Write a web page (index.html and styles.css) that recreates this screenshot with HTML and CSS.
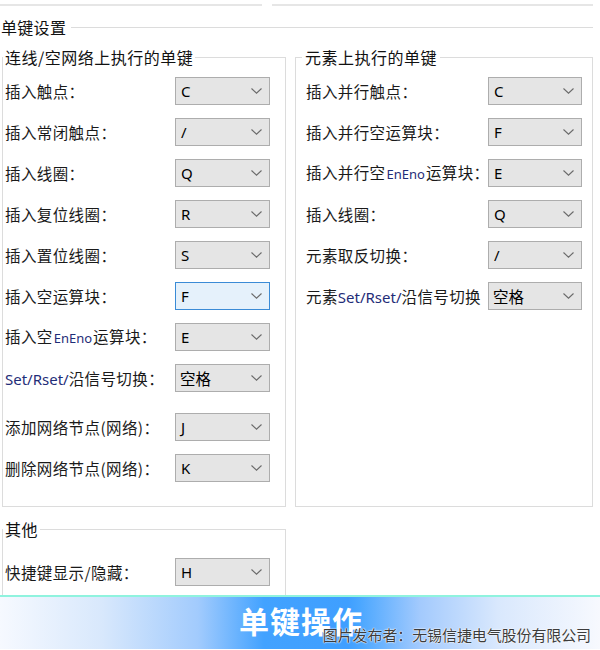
FILE: index.html
```html
<!DOCTYPE html>
<html lang="zh-CN">
<head>
<meta charset="utf-8">
<title>单键设置</title>
<link rel="stylesheet" href="styles.css">
</head>
<body>
<div class="page">
  <div class="topline"><span class="seg seg-left"></span><span class="seg seg-right"></span></div>
  <div class="heading"><span class="heading-text">单键设置</span><span class="heading-line"></span></div>

  <div class="groups">
    <fieldset class="group group-left">
      <legend class="legend legend-left">连线/空网络上执行的单键</legend>
      <div class="rows rows-left">
        <div class="row"><span class="label">插入触点：</span><div class="combo"><span class="val">C</span><svg class="chev" width="11" height="6" viewBox="0 0 11 6"><polyline points="0.5,0.5 5.5,5.2 10.5,0.5"/></svg></div></div>
        <div class="row"><span class="label">插入常闭触点：</span><div class="combo"><span class="val">/</span><svg class="chev" width="11" height="6" viewBox="0 0 11 6"><polyline points="0.5,0.5 5.5,5.2 10.5,0.5"/></svg></div></div>
        <div class="row"><span class="label">插入线圈：</span><div class="combo"><span class="val">Q</span><svg class="chev" width="11" height="6" viewBox="0 0 11 6"><polyline points="0.5,0.5 5.5,5.2 10.5,0.5"/></svg></div></div>
        <div class="row"><span class="label">插入复位线圈：</span><div class="combo"><span class="val">R</span><svg class="chev" width="11" height="6" viewBox="0 0 11 6"><polyline points="0.5,0.5 5.5,5.2 10.5,0.5"/></svg></div></div>
        <div class="row"><span class="label">插入置位线圈：</span><div class="combo"><span class="val">S</span><svg class="chev" width="11" height="6" viewBox="0 0 11 6"><polyline points="0.5,0.5 5.5,5.2 10.5,0.5"/></svg></div></div>
        <div class="row"><span class="label">插入空运算块：</span><div class="combo combo-focus"><span class="val">F</span><svg class="chev" width="11" height="6" viewBox="0 0 11 6"><polyline points="0.5,0.5 5.5,5.2 10.5,0.5"/></svg></div></div>
        <div class="row"><span class="label">插入空<span class="en-small">EnEno</span>运算块：</span><div class="combo"><span class="val">E</span><svg class="chev" width="11" height="6" viewBox="0 0 11 6"><polyline points="0.5,0.5 5.5,5.2 10.5,0.5"/></svg></div></div>
        <div class="row"><span class="label"><span class="en">Set/Rset/</span>沿信号切换：</span><div class="combo"><span class="val val-cjk">空格</span><svg class="chev" width="11" height="6" viewBox="0 0 11 6"><polyline points="0.5,0.5 5.5,5.2 10.5,0.5"/></svg></div></div>
        <div class="row row-sep"><span class="label">添加网络节点(网络)：</span><div class="combo"><span class="val">J</span><svg class="chev" width="11" height="6" viewBox="0 0 11 6"><polyline points="0.5,0.5 5.5,5.2 10.5,0.5"/></svg></div></div>
        <div class="row"><span class="label">删除网络节点(网络)：</span><div class="combo"><span class="val">K</span><svg class="chev" width="11" height="6" viewBox="0 0 11 6"><polyline points="0.5,0.5 5.5,5.2 10.5,0.5"/></svg></div></div>
      </div>
    </fieldset>

    <fieldset class="group group-right">
      <legend class="legend legend-right">元素上执行的单键</legend>
      <div class="rows rows-right">
        <div class="row"><span class="label label-right">插入并行触点：</span><div class="combo combo-right"><span class="val">C</span><svg class="chev" width="11" height="6" viewBox="0 0 11 6"><polyline points="0.5,0.5 5.5,5.2 10.5,0.5"/></svg></div></div>
        <div class="row"><span class="label label-right">插入并行空运算块：</span><div class="combo combo-right"><span class="val">F</span><svg class="chev" width="11" height="6" viewBox="0 0 11 6"><polyline points="0.5,0.5 5.5,5.2 10.5,0.5"/></svg></div></div>
        <div class="row"><span class="label label-right">插入并行空<span class="en-small">EnEno</span>运算块：</span><div class="combo combo-right"><span class="val">E</span><svg class="chev" width="11" height="6" viewBox="0 0 11 6"><polyline points="0.5,0.5 5.5,5.2 10.5,0.5"/></svg></div></div>
        <div class="row"><span class="label label-right">插入线圈：</span><div class="combo combo-right"><span class="val">Q</span><svg class="chev" width="11" height="6" viewBox="0 0 11 6"><polyline points="0.5,0.5 5.5,5.2 10.5,0.5"/></svg></div></div>
        <div class="row"><span class="label label-right">元素取反切换：</span><div class="combo combo-right"><span class="val">/</span><svg class="chev" width="11" height="6" viewBox="0 0 11 6"><polyline points="0.5,0.5 5.5,5.2 10.5,0.5"/></svg></div></div>
        <div class="row"><span class="label label-right">元素<span class="en">Set/Rset/</span>沿信号切换</span><div class="combo combo-right"><span class="val val-cjk">空格</span><svg class="chev" width="11" height="6" viewBox="0 0 11 6"><polyline points="0.5,0.5 5.5,5.2 10.5,0.5"/></svg></div></div>
      </div>
    </fieldset>
  </div>

  <fieldset class="group group-other">
    <legend class="legend legend-left">其他</legend>
    <div class="rows rows-other">
      <div class="row"><span class="label">快捷键显示/隐藏：</span><div class="combo"><span class="val">H</span><svg class="chev" width="11" height="6" viewBox="0 0 11 6"><polyline points="0.5,0.5 5.5,5.2 10.5,0.5"/></svg></div></div>
    </div>
  </fieldset>

  <div class="banner">
    <span class="banner-title">单键操作</span>
    <span class="credit">图片发布者：无锡信捷电气股份有限公司</span>
  </div>
</div>
</body>
</html>
```

FILE: styles.css
```css
html, body {
  margin: 0;
  padding: 0;
  background: #ffffff;
}

body {
  width: 600px;
  height: 650px;
  overflow: hidden;
  font-family: "Noto Sans CJK SC", "Noto Sans", sans-serif;
  color: #1a1a1a;
}

.page {
  width: 600px;
  display: flex;
  flex-direction: column;
}

.topline {
  display: flex;
  width: 593px;
  gap: 10px;
  margin-top: 4px;
  height: 2px;
}

.seg {
  display: block;
  height: 2px;
  background: #e6e6e6;
}

.seg-left {
  width: 262px;
}

.seg-right {
  flex: 1;
}

.heading {
  display: flex;
  align-items: center;
  width: 593px;
  margin-top: 11px;
  height: 20px;
}

.heading-text {
  font-size: 16px;
  line-height: 20px;
  letter-spacing: 0.3px;
  padding-left: 1px;
  color: #111;
}

.heading-line {
  flex: 1;
  height: 1px;
  background: #dcdcdc;
  margin-left: 5px;
}

.groups {
  display: flex;
  margin-top: 10px;
  margin-left: 2px;
  gap: 9px;
}

.group {
  margin: 0;
  padding: 0;
  min-width: 0;
  border: 1px solid #dcdcdc;
  box-sizing: border-box;
}

.group-left {
  width: 284px;
}

.group-right {
  width: 298px;
}

.legend {
  font-size: 16px;
  line-height: 20px;
  letter-spacing: 0.5px;
  color: #111;
}

.legend-left {
  margin-left: 0;
  padding: 0 2px 0 2px;
}

.legend-right {
  margin-left: 6px;
  padding: 0 3px;
}

.rows {
  display: flex;
  flex-direction: column;
  gap: 13px;
  padding-top: 10px;
}

.rows-left {
  padding-left: 2px;
  padding-bottom: 24px;
}

.rows-right {
  padding-left: 10px;
}

.row {
  display: flex;
  align-items: center;
  height: 28px;
}

.row-sep {
  margin-top: 8px;
}

.label {
  width: 170px;
  flex: none;
  white-space: nowrap;
  font-size: 15.5px;
  line-height: 20px;
  letter-spacing: 0.4px;
  color: #1a1a1a;
}

.label-right {
  width: 182px;
}

.en {
  font-family: "Noto Sans", sans-serif;
  font-size: 15px;
  letter-spacing: 0;
  color: #1f2d78;
}

.en-small {
  font-family: "Noto Sans", sans-serif;
  font-size: 13px;
  letter-spacing: 0;
  color: #1f2d78;
  padding: 0 1px;
}

.combo {
  flex: none;
  width: 95px;
  height: 28px;
  box-sizing: border-box;
  border: 1px solid #adadad;
  background: #e5e5e5;
  display: flex;
  align-items: center;
  justify-content: space-between;
  padding: 0 6px 0 4px;
}

.combo-right {
  width: 94px;
}

.combo-focus {
  background: #e5f1fb;
  border-color: #3a8bd6;
}

.val {
  font-family: "Noto Sans", sans-serif;
  font-size: 15px;
  line-height: 20px;
  color: #000;
  padding-left: 1px;
}

.val-cjk {
  font-family: "Noto Sans CJK SC", sans-serif;
  font-size: 15.5px;
  padding-left: 0;
}

.chev {
  display: block;
  margin-right: 1px;
}

.chev polyline {
  fill: none;
  stroke: #6a6a6a;
  stroke-width: 1.1;
}

.group-other {
  width: 284px;
  margin-top: 12px;
  margin-left: 2px;
  border-bottom: none;
}

.rows-other {
  padding-left: 2px;
  padding-top: 19px;
  padding-bottom: 9px;
}

.banner {
  position: relative;
  height: 54px;
  box-sizing: border-box;
  border-top: 2px solid #8ff3de;
  background: linear-gradient(to right, #f6f9ff 0%, #d8e8fc 17%, #a2cbfd 33%, #42a2ff 44%, #3f9fff 58%, #4ba7ff 60%, #a3cafd 70%, #d9e8fd 83%, #f7f9fe 100%);
  display: flex;
  justify-content: center;
  align-items: flex-start;
}

.banner-title {
  font-family: "Noto Sans CJK SC", sans-serif;
  font-size: 30px;
  font-weight: 700;
  line-height: 46px;
  letter-spacing: 1px;
  color: #ffffff;
  margin-left: 2px;
}

.credit {
  position: absolute;
  right: 9px;
  bottom: 5px;
  font-family: "Noto Sans CJK SC", sans-serif;
  font-size: 15px;
  line-height: 18px;
  letter-spacing: -0.1px;
  color: #3c3c3c;
  text-shadow: 0 0 2px #ffffff, 0 0 1px #ffffff, 0 0 1px #ffffff;
}
```
